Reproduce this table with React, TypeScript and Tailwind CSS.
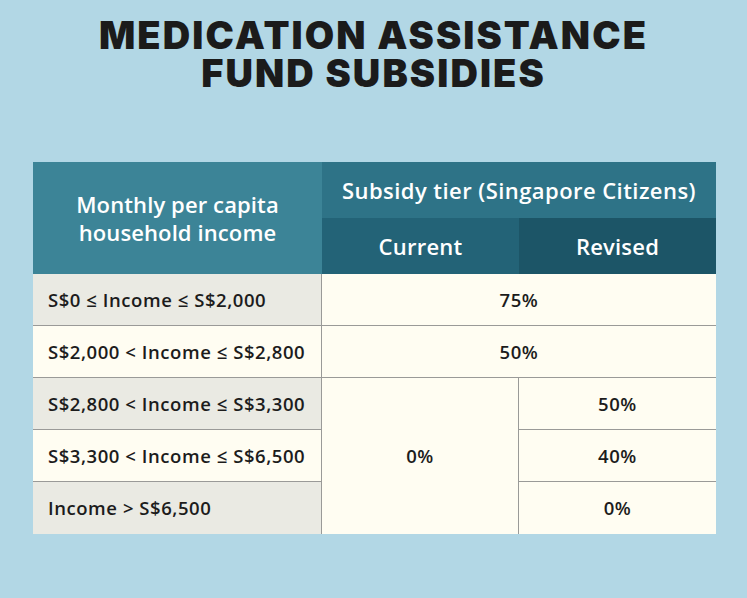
import React from 'react';

interface Row {
  income: string;
  shaded: boolean;
}

const rows: Row[] = [
  { income: 'S$0 ≤ Income ≤ S$2,000', shaded: true },
  { income: 'S$2,000 < Income ≤ S$2,800', shaded: false },
  { income: 'S$2,800 < Income ≤ S$3,300', shaded: true },
  { income: 'S$3,300 < Income ≤ S$6,500', shaded: false },
  { income: 'Income > S$6,500', shaded: true },
];

const bodyFont = { fontFamily: '"Open Sans", Lato, sans-serif' };

export default function App() {
  return (
    <div className="w-[747px] h-[598px] bg-[#b2d7e5] overflow-hidden" style={bodyFont}>
      {/* Title */}
      <div
        className="pt-[16px] text-center text-[38px] font-black tracking-[0.055em] text-[#1b1b1b]"
        style={{ fontFamily: 'Inter, "DejaVu Sans", sans-serif' }}
      >
        <div className="h-[38px] leading-[38px]">MEDICATION ASSISTANCE</div>
        <div className="h-[38px] leading-[38px]">FUND SUBSIDIES</div>
      </div>

      {/* Table */}
      <div className="mt-[70px] ml-[33px] w-[683px] grid grid-cols-[289px_197px_197px] grid-rows-[56px_56px_52px_52px_52px_52px_52px]">
        {/* Header */}
        <div className="row-span-2 bg-[#3c8497] flex items-center justify-center text-center text-white text-[22px] leading-[28px] font-semibold tracking-[0.005em]">
          Monthly per capita
          <br />
          household income
        </div>
        <div className="col-span-2 bg-[#2e7387] flex items-center justify-center text-white text-[22px] font-semibold tracking-[0.02em]">
          Subsidy tier (Singapore Citizens)
        </div>
        <div className="bg-[#236377] flex items-center justify-center text-white text-[22px] font-semibold tracking-[0.01em]">
          Current
        </div>
        <div className="bg-[#1c5567] flex items-center justify-center text-white text-[22px] font-semibold tracking-[0.01em]">
          Revised
        </div>

        {/* Body */}
        {rows.map((row, i) => (
          <div
            key={row.income}
            className={`flex items-center pl-[15px] text-[18.5px] font-semibold tracking-[0.03em] text-[#1c1c1c] border-r border-[#9a9a98] ${
              i < rows.length - 1 ? 'border-b' : ''
            } ${row.shaded ? 'bg-[#eaeae3]' : 'bg-[#fffdf2]'}`}
            style={{ gridColumnStart: 1, gridRowStart: i + 3 }}
          >
            {row.income}
          </div>
        ))}

        <div className="col-start-2 col-span-2 row-start-3 bg-[#fffdf2] border-b border-[#9a9a98] flex items-center justify-center text-[18.5px] font-semibold tracking-[0.03em] text-[#1c1c1c]">
          75%
        </div>
        <div className="col-start-2 col-span-2 row-start-4 bg-[#fffdf2] border-b border-[#9a9a98] flex items-center justify-center text-[18.5px] font-semibold tracking-[0.03em] text-[#1c1c1c]">
          50%
        </div>
        <div className="col-start-2 row-start-5 row-span-3 bg-[#fffdf2] border-r border-[#9a9a98] flex items-center justify-center text-[18.5px] font-semibold tracking-[0.03em] text-[#1c1c1c]">
          0%
        </div>
        <div className="col-start-3 row-start-5 bg-[#fffdf2] border-b border-[#9a9a98] flex items-center justify-center text-[18.5px] font-semibold tracking-[0.03em] text-[#1c1c1c]">
          50%
        </div>
        <div className="col-start-3 row-start-6 bg-[#fffdf2] border-b border-[#9a9a98] flex items-center justify-center text-[18.5px] font-semibold tracking-[0.03em] text-[#1c1c1c]">
          40%
        </div>
        <div className="col-start-3 row-start-7 bg-[#fffdf2] flex items-center justify-center text-[18.5px] font-semibold tracking-[0.03em] text-[#1c1c1c]">
          0%
        </div>
      </div>
    </div>
  );
}
